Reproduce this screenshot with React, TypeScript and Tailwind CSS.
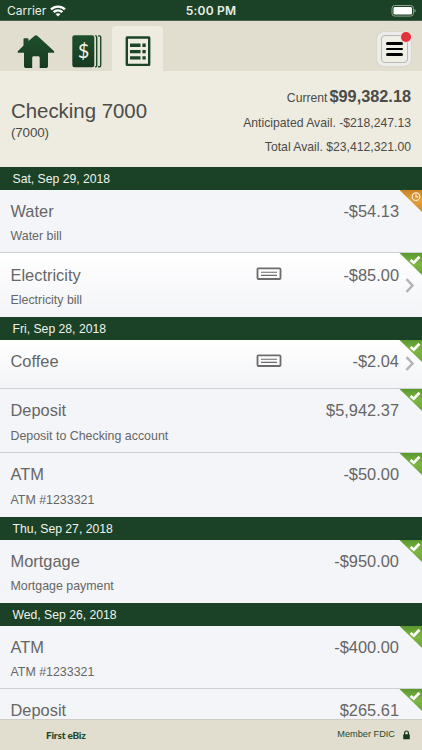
type Status = "pending" | "cleared";

type Transaction = {
  name: string;
  memo?: string;
  amount: string;
  status: Status;
  check?: boolean;
  height: string;
};

type Day = {
  date: string;
  items: Transaction[];
};

const days: Day[] = [
  {
    date: "Sat, Sep 29, 2018",
    items: [
      { name: "Water", memo: "Water bill", amount: "-$54.13", status: "pending", height: "h-[63px] pt-[11px] gap-[7px]" },
      {
        name: "Electricity",
        memo: "Electricity bill",
        amount: "-$85.00",
        status: "cleared",
        check: true,
        height: "h-16 pt-3 gap-[7px]",
      },
    ],
  },
  {
    date: "Fri, Sep 28, 2018",
    items: [
      { name: "Coffee", amount: "-$2.04", status: "cleared", check: true, height: "h-[49px] pt-[11px]" },
      {
        name: "Deposit",
        memo: "Deposit to Checking account",
        amount: "$5,942.37",
        status: "cleared",
        height: "h-16 pt-[11px] gap-2",
      },
      { name: "ATM", memo: "ATM #1233321", amount: "-$50.00", status: "cleared", height: "h-16 pt-[11px] gap-2" },
    ],
  },
  {
    date: "Thu, Sep 27, 2018",
    items: [
      {
        name: "Mortgage",
        memo: "Mortgage payment",
        amount: "-$950.00",
        status: "cleared",
        height: "h-[63px] pt-[11px] gap-[7px]",
      },
    ],
  },
  {
    date: "Wed, Sep 26, 2018",
    items: [
      { name: "ATM", memo: "ATM #1233321", amount: "-$400.00", status: "cleared", height: "h-[63px] pt-[11px] gap-[7px]" },
      { name: "Deposit", amount: "$265.61", status: "cleared", height: "h-16 pt-[11px]" },
    ],
  },
];

function StatusBar() {
  return (
    <div className="grid h-[21px] shrink-0 grid-cols-3 items-center border-b border-[#45604a] bg-[#1b4226] px-[7px] pt-px font-['Inter',sans-serif] text-[12px] leading-none text-[#e9eee6]">
      <div className="flex items-center gap-1">
        <span className="text-[12px]">Carrier</span>
        <svg width="16" height="12" viewBox="0 0 16 12" fill="none" stroke="#fff" strokeWidth="2.300">
          <path d="M1 4.4C4.9 .6 11.1 .6 15 4.4" />
          <path d="M3.6 7.2c2.5-2.3 6.3-2.3 8.8 0" />
          <path d="M8 11.6 5.5 9.1c1.4-1.3 3.6-1.3 5 0z" fill="#fff" stroke="none" />
        </svg>
      </div>
      <span className="text-center font-semibold tracking-[0.200px]">5:00 PM</span>
      <svg className="mr-[-6px] justify-self-end" width="32" height="12" viewBox="0 0 32 12">
        <rect x="3" y=".5" width="21.500" height="10.6" rx="2.8" fill="none" stroke="#8ea391" />
        <rect x="4.500" y="2" width="18.500" height="7.6" rx="1.4" fill="#fff" />
        <path d="M25.500 4v3.6c.9-.3 1.2-1 1.2-1.8S26.400 4.300 25.500 4z" fill="#8ea391" />
      </svg>
    </div>
  );
}

function HomeIcon() {
  return (
    <svg width="38" height="34" viewBox="0 0 38 34" fill="url(#home)">
      <defs>
        <linearGradient id="home" x2="0" y2="1">
          <stop stopColor="#1f4f2c" />
          <stop offset="1" stopColor="#173a20" />
        </linearGradient>
      </defs>
      <path d="M6.500 10.500V4.300c0-.6.4-1 1-1h3c.6 0 1 .4 1 1v1.600L17.300.9c1-.8 2.300-.8 3.300 0l16.300 15c.8.8.4 1.900-.7 1.900H31V31c0 1.200-.9 2.100-2.100 2.100h-6.200V22.700c0-.9-.6-1.500-1.500-1.500h-4.500c-.9 0-1.500.6-1.500 1.500v10.400H9.100C7.900 33.100 7 32.200 7 31V17.800H1.700c-1.100 0-1.500-1.100-.7-1.900z" />
    </svg>
  );
}

function LedgerIcon() {
  return (
    <svg width="30" height="33" viewBox="0 0 30 33">
      <defs>
        <linearGradient id="ledger" x2="0" y2="1">
          <stop stopColor="#1f4f2c" />
          <stop offset="1" stopColor="#173a20" />
        </linearGradient>
      </defs>
      <rect x=".3" y=".3" width="22" height="32" rx="2.200" fill="url(#ledger)" />
      <path
        d="M23.100.9h.7c.6 0 .9.4.9 1v28.800c0 .6-.3 1-.9 1h-.7M26.100.9h1.400c.8 0 1.200.4 1.200 1.200v28.400c0 .8-.4 1.200-1.200 1.200h-1.400"
        fill="none"
        stroke="#1d4829"
        strokeWidth="1.400"
      />
      <text x="11.500" y="22.500" textAnchor="middle" className="font-['Lato',sans-serif] text-[20px]" fill="#f2f2e8">
        $
      </text>
    </svg>
  );
}

function ListIcon() {
  return (
    <svg width="26" height="31" viewBox="0 0 26 31" fill="#1b4527">
      <rect x="1.800" y="1.500" width="22.400" height="27.400" rx=".3" fill="none" stroke="#1b4527" strokeWidth="2.400" />
      <path d="M5 7.600h10.500V11H5zM17.400 7.600h3.300V11h-3.300zM5 13.900h10.500v3.400H5zM17.400 13.900h3.300v3.400h-3.300zM5 20.200h10.500v3.400H5zM17.400 20.200h3.300v3.400h-3.300z" />
    </svg>
  );
}

function Toolbar() {
  return (
    <div className="flex h-[50px] shrink-0 items-end bg-[#e1ddcf] pr-[11px] pl-[17px]">
      <div className="flex h-full w-[55px] items-start pt-[14px]">
        <HomeIcon />
      </div>
      <div className="flex h-full w-10 items-start pt-[14px]">
        <LedgerIcon />
      </div>
      <div className="flex h-[45px] w-[51px] items-start justify-center rounded-t bg-[#eeebe0] pt-[10px]">
        <ListIcon />
      </div>
      <button
        type="button"
        className="relative mb-[5px] ml-auto flex h-[34px] w-[34px] items-center justify-center rounded-md bg-[#ececea] shadow-[0_0_1px_#aaa]"
      >
        <span className="flex h-7 w-[27px] flex-col items-center justify-center gap-[3px] rounded border border-[#b9b9b3] bg-[#f0efe5]">
          <span className="h-[2.500px] w-[17px] rounded-sm bg-black" />
          <span className="h-[2.500px] w-[17px] rounded-sm bg-black" />
          <span className="h-[2.500px] w-[17px] rounded-sm bg-black" />
        </span>
        <span className="absolute top-0 right-0 h-[10px] w-[10px] rounded-full bg-[#e2313c] shadow-[0_0_0_1px_#f1d9d3]" />
      </button>
    </div>
  );
}

function AccountSummary() {
  return (
    <div className="flex h-24 shrink-0 justify-between bg-[#eeebe0] pr-[11px] pl-[11px] text-[#4b4b48]">
      <div className="pt-[28px]">
        <h1 className="text-[20.400px] leading-[25px]">Checking 7000</h1>
        <p className="text-[13.400px] leading-[17px] tracking-[-0.150px]">(7000)</p>
      </div>
      <div className="pt-[13px] text-right text-[12.200px] leading-[24.600px]">
        <p className="flex items-baseline justify-end gap-0.5">
          Current <b className="text-[16.300px]">$99,382.18</b>
        </p>
        <p>Anticipated Avail. -$218,247.13</p>
        <p>Total Avail. $23,412,321.00</p>
      </div>
    </div>
  );
}

function Corner({ status }: { status: Status }) {
  const pending = status === "pending";
  const id = `corner-${status}`;
  return (
    <svg className="absolute top-0 right-0" width="23" height="22" viewBox="0 0 23 22">
      <defs>
        <linearGradient id={id} x2="0" y2="1">
          <stop stopColor={pending ? "#c98524" : "#5b982e"} />
          <stop offset=".5" stopColor={pending ? "#e39f3a" : "#7db544"} />
          <stop offset="1" stopColor={pending ? "#d08a2a" : "#69a534"} />
        </linearGradient>
      </defs>
      <path d="M.5 0H23v22z" fill={`url(#${id})`} />
      {pending ? (
        <g fill="none" stroke="#fbeed6" strokeWidth="1.200">
          <circle cx="17" cy="6.700" r="3.800" />
          <path d="M17 4.200v2.700h2.200" />
        </g>
      ) : (
        <path d="m11.600 6.900 3.200 2.800 5.700-6" fill="none" stroke="#fff" strokeWidth="2.700" />
      )}
    </svg>
  );
}

function CheckIcon() {
  return (
    <svg className="absolute top-[14px] left-[256px]" width="26" height="14" viewBox="0 0 26 14" fill="none" stroke="#6c6c6c">
      <rect x="1.500" y="1.400" width="23" height="10.600" rx="1" strokeWidth="1.800" />
      <path d="M5 5.200h16M5 8.400h16" strokeWidth="1.100" />
    </svg>
  );
}

function Row({ item, last }: { item: Transaction; last: boolean }) {
  return (
    <div
      className={`relative flex shrink-0 flex-col px-[10.500px] ${item.height} ${item.check ? "bg-linear-to-b from-white to-[#f3f4f7]" : "bg-[#f4f5f8]"} ${last ? "" : "border-b border-[#cfd0d2]"}`}
    >
      <div className="flex justify-between pr-[12.500px] text-[16.400px] leading-5 text-[#666]">
        <span>{item.name}</span>
        <span>{item.amount}</span>
      </div>
      {item.memo ? <p className="text-[12.400px] leading-4 text-[#666]">{item.memo}</p> : null}
      {item.check ? (
        <>
          <CheckIcon />
          <svg
            className={`absolute right-[7px] ${item.memo ? "top-[25px]" : "top-[16px]"}`}
            width="10"
            height="15"
            viewBox="0 0 10 15"
            fill="none"
            stroke="#b4b4b6"
            strokeWidth="2.500"
          >
            <path d="m1.500 1.200 6 6.300-6 6.300" />
          </svg>
        </>
      ) : null}
      <Corner status={item.status} />
    </div>
  );
}

export default function App() {
  return (
    <div className="flex h-[750px] w-[422px] flex-col overflow-hidden bg-[#f4f5f8] font-['Liberation_Sans',Arial,sans-serif]">
      <StatusBar />
      <Toolbar />
      <AccountSummary />
      <main className="flex min-h-0 flex-1 flex-col overflow-hidden">
        {days.map((day) => (
          <section key={day.date} className="flex shrink-0 flex-col">
            <h2 className="h-[23px] bg-[#1b4226] pl-[12.500px] text-[12.200px] leading-[25px] text-[#f1f3ee]">{day.date}</h2>
            {day.items.map((item, i) => (
              <Row key={item.name} item={item} last={i === day.items.length - 1} />
            ))}
          </section>
        ))}
      </main>
      <footer className="flex h-[31px] shrink-0 items-center justify-between border-t border-[#cfccc3] bg-[#e1ddcf] pr-3 pl-[46px] text-[#1f4a2a]">
        <span className="font-['Lato',sans-serif] text-[10px] leading-[17px] font-black tracking-[-0.200px]">First eBiz</span>
        <span className="flex items-center gap-2 text-[9.200px]">
          Member FDIC
          <svg width="7" height="10" viewBox="0 0 7 10">
            <path d="M1.600 5V2.900a1.900 1.900 0 0 1 3.800 0V5" fill="none" stroke="#173a20" strokeWidth="1.200" />
            <rect x=".2" y="4.300" width="6.600" height="5" rx=".6" fill="#173a20" />
          </svg>
        </span>
      </footer>
    </div>
  );
}
